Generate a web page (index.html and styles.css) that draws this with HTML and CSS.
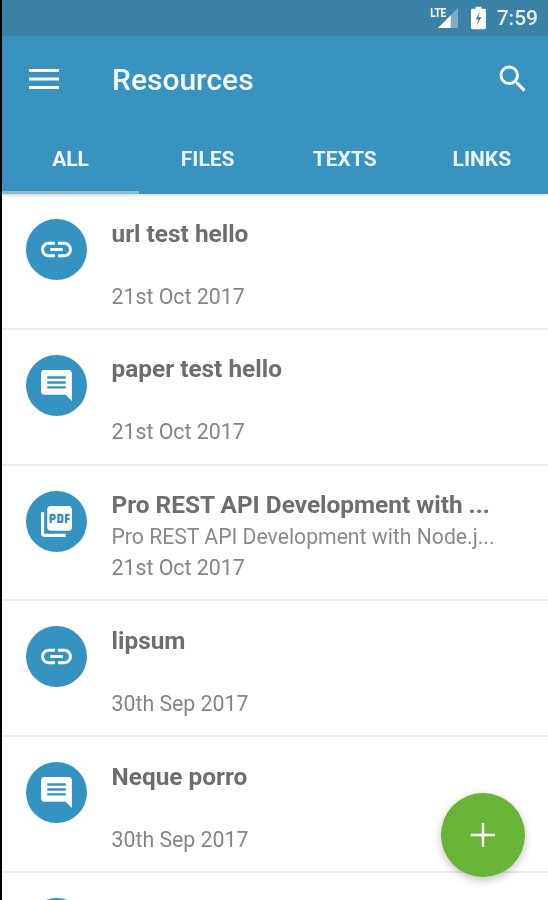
FILE: index.html
```html
<!DOCTYPE html>
<html lang="en">
<head>
<meta charset="utf-8">
<title>Resources</title>
<link rel="stylesheet" href="styles.css">
</head>
<body>
<svg class="sprites" width="0" height="0" aria-hidden="true">
  <symbol id="i-link" viewBox="0 0 24 24"><path d="M3.9 12c0-1.71 1.39-3.1 3.1-3.1h4V7H7c-2.76 0-5 2.24-5 5s2.24 5 5 5h4v-1.9H7c-1.71 0-3.1-1.39-3.1-3.1zM8 13h8v-2H8v2zm9-6h-4v1.9h4c1.71 0 3.1 1.39 3.1 3.1s-1.39 3.1-3.1 3.1h-4V17h4c2.76 0 5-2.24 5-5s-2.24-5-5-5z"/></symbol>
  <symbol id="i-text" viewBox="0 0 24 24"><path d="M20 2H4c-1.100 0-2 .9-2 2v12c0 1.100.9 2 2 2h14l4 4V4c0-1.100-.9-2-2-2zM18 14H6v-1.500h12V14zm0-3.200H6V9.300h12v1.500zm0-3.200H6V6h12v1.600z"/></symbol>
  <symbol id="i-pdf" viewBox="0 0 24 24"><path d="M20 2H8c-1.100 0-2 .9-2 2v12c0 1.100.9 2 2 2h12c1.100 0 2-.9 2-2V4c0-1.100-.9-2-2-2zm-8.500 7.500c0 .83-.67 1.500-1.500 1.500H9v2H7.500V7H10c.83 0 1.500.67 1.500 1.500v1zm5 2c0 .83-.67 1.500-1.500 1.500h-2.500V7H15c.83 0 1.500.67 1.500 1.500v3zm4-3H19v1h1.500V11H19v2h-1.500V7h3v1.500zM9 9.500h1v-1H9v1zM4 6H2v14c0 1.100.9 2 2 2h14v-2H4V6zm10 5.500h1v-3h-1v3z"/></symbol>
</svg>
<div class="app">
  <header class="header">
    <div class="status">
      <span class="lte">LTE</span>
      <svg class="signal" viewBox="0 0 22 22"><path class="signal-bg" d="M22 0v22H0z"/><path class="signal-fg" d="M14 8v14H0z"/></svg>
      <svg class="battery" viewBox="0 0 16 24"><path fill-rule="evenodd" d="M5 0h6v2h3.500c.8 0 1.500.7 1.500 1.500V22.500c0 .8-.7 1.500-1.500 1.500H1.500C.7 24 0 23.300 0 22.500V3.500C0 2.700.7 2 1.500 2H5zM9.500 5 5 13.500h3L6.500 20 11 11H8z"/></svg>
      <span class="clock">7:59</span>
    </div>
    <div class="toolbar">
      <svg class="menu" viewBox="0 0 30 20"><path d="M0 0h30v3H0zM0 8.500h30v3H0zM0 17h30v3H0z"/></svg>
      <h1 class="title">Resources</h1>
      <svg class="search" viewBox="0 0 24 24"><path d="M15.500 14h-.79l-.28-.27A6.470 6.470 0 0 0 16 9.500 6.500 6.500 0 1 0 9.500 16c1.610 0 3.090-.59 4.230-1.570l.27.28v.79l5 4.990L20.490 19l-4.990-5zm-6 0C7.010 14 5 11.990 5 9.500S7.010 5 9.500 5 14 7.010 14 9.500 11.990 14 9.500 14z"/></svg>
    </div>
    <nav class="tabs">
      <span class="tab tab-active">ALL</span>
      <span class="tab">FILES</span>
      <span class="tab">TEXTS</span>
      <span class="tab">LINKS</span>
    </nav>
  </header>
  <main class="list">
    <article class="row">
      <div class="badge"><svg class="glyph"><use href="#i-link"/></svg></div>
      <div class="body"><div class="name">url test hello</div><div class="desc"></div><div class="date">21st Oct 2017</div></div>
    </article>
    <article class="row">
      <div class="badge"><svg class="glyph"><use href="#i-text"/></svg></div>
      <div class="body"><div class="name">paper test hello</div><div class="desc"></div><div class="date">21st Oct 2017</div></div>
    </article>
    <article class="row">
      <div class="badge"><svg class="glyph"><use href="#i-pdf"/></svg></div>
      <div class="body"><div class="name">Pro REST API Development with ...</div><div class="desc">Pro REST API Development with Node.j...</div><div class="date">21st Oct 2017</div></div>
    </article>
    <article class="row">
      <div class="badge"><svg class="glyph"><use href="#i-link"/></svg></div>
      <div class="body"><div class="name">lipsum</div><div class="desc"></div><div class="date">30th Sep 2017</div></div>
    </article>
    <article class="row">
      <div class="badge"><svg class="glyph"><use href="#i-text"/></svg></div>
      <div class="body"><div class="name">Neque porro</div><div class="desc"></div><div class="date">30th Sep 2017</div></div>
    </article>
    <article class="row">
      <div class="badge"></div>
    </article>
  </main>
  <button class="fab" aria-label="Add"><svg viewBox="0 0 24 24"><path d="M10.800 0h2.400v10.800H24v2.400H13.200V24h-2.400V13.200H0v-2.400h10.800z"/></svg></button>
</div>
</body>
</html>
```
FILE: styles.css
```css
* { box-sizing: border-box; }
html, body { margin: 0; height: 900px; overflow: hidden; background: #000; }
body { padding-left: 2px; font-family: Roboto, "Noto Sans", sans-serif; }
.sprites { position: absolute; }
.app { position: relative; height: 900px; overflow: hidden; background: #fff; filter: blur(0.7px); }

.header { background: #3993c0; height: 194px; box-shadow: 0 1px 3px rgba(0,0,0,.2); position: relative; z-index: 1; }
.status { height: 36px; background: #3a82a6; display: flex; align-items: center; justify-content: flex-end; padding-right: 10px; color: #e8f1f5; }
.lte { font-size: 12px; font-weight: 700; letter-spacing: -.4px; align-self: flex-start; margin: 6px -9px 0 0; color: #fff; transform: scaleX(.85); }
.signal { width: 20px; height: 22px; margin-right: 2px; }
.signal-bg { fill: rgba(255,255,255,.35); }
.signal-fg { fill: #fff; }
.battery { width: 15px; height: 24px; fill: #fff; margin-left: 11px; }
.clock { font-size: 21px; font-weight: 500; margin-left: 11px; color: #e6eff4; }

.toolbar { height: 86px; display: flex; align-items: center; padding: 0 24px 0 27px; }
.menu { width: 30px; height: 20px; fill: #fff; }
.title { margin: 0 0 0 53px; flex: 1; font-size: 30px; font-weight: 500; color: #f4f9fb; }
.search { width: 36px; height: 36px; fill: #f4f9fb; margin-right: -7px; }

.tabs { display: grid; grid-template-columns: repeat(4, 137.1px); height: 72px; }
.tab { display: flex; align-items: center; justify-content: center; padding-top: 1px; font-size: 21px; font-weight: 700; color: #e9f3f8; }
.tab-active { box-shadow: inset 0 -3px 0 #84bdd6; color: #f4f9fb; }

.row { height: 135.750px; display: flex; padding: 25px 24px 0; border-bottom: 2px solid #ececec; }
.badge { width: 61px; height: 61px; flex: none; border-radius: 50%; background: #3493c0; display: flex; align-items: center; justify-content: center; }
.glyph { width: 37px; height: 37px; fill: #fff; }
.body { margin-left: 24.500px; min-width: 0; flex: 1; display: flex; flex-direction: column; }
.name { font-size: 24.400px; font-weight: 700; line-height: 28px; margin-top: .5px; color: #6e6e6e; white-space: nowrap; }
.desc { height: 35px; font-size: 21.200px; line-height: 35px; color: #8a8a8a; white-space: nowrap; }
.date { font-size: 21.300px; line-height: 28px; color: #858585; }

.fab { position: absolute; left: 439px; top: 793px; width: 84px; height: 84px; border: 0; padding: 30px; border-radius: 50%; background: #67b437; box-shadow: 0 3px 8px rgba(0,0,0,.25); z-index: 2; }
.fab svg { display: block; width: 24px; height: 24px; fill: #fff; }
```
